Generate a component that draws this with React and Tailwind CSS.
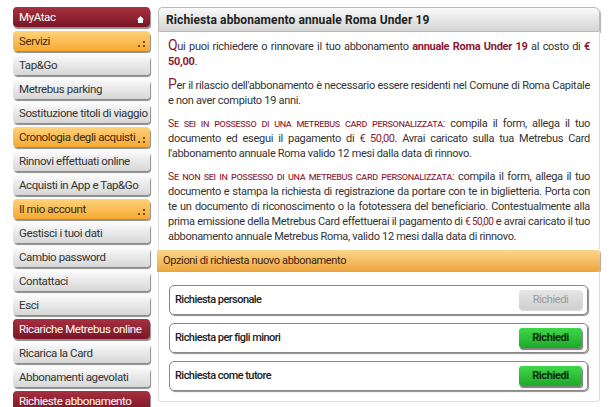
import React from 'react'

const menu = [
  { label: 'MyAtac', kind: 'red', icon: 'home' },
  { label: 'Servizi', kind: 'orange', icon: 'dots' },
  { label: 'Tap&Go', kind: 'gray' },
  { label: 'Metrebus parking', kind: 'gray' },
  { label: 'Sostituzione titoli di viaggio', kind: 'gray' },
  { label: 'Cronologia degli acquisti', kind: 'orange', icon: 'dots' },
  { label: 'Rinnovi effettuati online', kind: 'gray' },
  { label: 'Acquisti in App e Tap&Go', kind: 'gray' },
  { label: 'Il mio account', kind: 'orange', icon: 'dots' },
  { label: 'Gestisci i tuoi dati', kind: 'gray' },
  { label: 'Cambio password', kind: 'gray' },
  { label: 'Contattaci', kind: 'gray' },
  { label: 'Esci', kind: 'gray' },
  { label: 'Ricariche Metrebus online', kind: 'red' },
  { label: 'Ricarica la Card', kind: 'gray' },
  { label: 'Abbonamenti agevolati', kind: 'gray' },
  { label: 'Richieste abbonamento', kind: 'red' },
]

const kinds = {
  red: 'bg-gradient-to-b from-[#a8303f] to-[#7a1426] text-white',
  orange: 'bg-gradient-to-b from-[#ffd27a] to-[#f6a92a] text-[#3a2a10]',
  gray: 'bg-gradient-to-b from-[#fbfbfb] to-[#d6d6d6] text-[#333]',
}

function Dots() {
  return (
    <svg width="7" height="6" viewBox="0 0 7 6" className="absolute right-[5px] bottom-[4px]">
      <rect x="5" y="0" width="2" height="2" fill="#6b4a10" />
      <rect x="0" y="4" width="2" height="2" fill="#6b4a10" />
      <rect x="5" y="4" width="2" height="2" fill="#6b4a10" />
    </svg>
  )
}

function Home() {
  return (
    <svg width="7" height="7" viewBox="0 0 7 7" className="absolute right-[6px] bottom-[4px]">
      <path d="M3.5 0 L7 3.5 L6 3.5 L6 7 L1 7 L1 3.5 L0 3.5 Z" fill="#fff" />
    </svg>
  )
}

const red = 'text-[#8b1a33]'
const caps = `${red} [font-variant:small-caps] text-[10.5px] tracking-[-0.35px]`
const euro = `${red} text-[10px] tracking-[-0.6px]`

// one full line of justified text
function L({ children }) {
  return <div className="whitespace-nowrap text-justify [text-align-last:justify]">{children}</div>
}

function App() {
  return (
    <div className="flex w-[610px] h-[407px] overflow-hidden bg-white pt-[7px] font-['Roboto',sans-serif]">
      <div className="flex flex-col gap-[4px] w-[137px] ml-[13px] shrink-0">
        {menu.map((item, i) => (
          <div
            key={i}
            className={`relative h-[20px] shrink-0 rounded-[4px] pl-[6px] text-[11.5px] tracking-[-0.4px] leading-[20px] whitespace-nowrap shadow-[1px_2px_1px_rgba(0,0,0,0.45)] ${kinds[item.kind]}`}
          >
            {item.label}
            {item.icon === 'dots' && <Dots />}
            {item.icon === 'home' && <Home />}
          </div>
        ))}
      </div>

      <div className="ml-[8px] w-[442px] shrink-0 flex flex-col">
        <div className="h-[25px] shrink-0 rounded-t-[4px] rounded-tr-[6px] bg-gradient-to-b from-[#fafafa] to-[#d4d4d4] border border-[#bbb] shadow-[1px_1px_1px_rgba(0,0,0,0.3)] pl-[7px] text-[12px] tracking-[0.1px] font-bold leading-[24px] text-[#222]">
          Richiesta abbonamento annuale Roma Under 19
        </div>
        <div className="border-x border-[#ddd] bg-white pl-[9px] pr-[9px] pt-[6px] pb-[6px] text-[11px] tracking-[-0.3px] leading-[15px] text-[#333] flex flex-col gap-[8px]">
          <div>
            <L>
              <span className={`${red} text-[14px] leading-[15px]`}>Q</span>ui puoi richiedere o rinnovare il tuo abbonamento{' '}
              <span className={`${red} font-bold`}>annuale Roma Under 19</span> al costo di{' '}
              <span className={`${red} font-bold`}>€</span>
            </L>
            <div>
              <span className={`${red} font-bold`}>50,00</span>.
            </div>
          </div>
          <div>
            <L>
              <span className={`${red} text-[14px] leading-[15px]`}>P</span>er il rilascio dell'abbonamento è necessario essere residenti nel Comune di Roma Capitale
            </L>
            <div>e non aver compiuto 19 anni.</div>
          </div>
          <div>
            <L>
              <span className={caps}>Se sei in possesso di una metrebus card personalizzata:</span> compila il form, allega il tuo
            </L>
            <L>
              documento ed esegui il pagamento di <span className={`${red} tracking-[-0.5px]`}>€ 50,00</span>. Avrai caricato sulla tua Metrebus Card
            </L>
            <div>l'abbonamento annuale Roma valido 12 mesi dalla data di rinnovo.</div>
          </div>
          <div>
            <L>
              <span className={caps}>Se non sei in possesso di una metrebus card personalizzata:</span> compila il form, allega il tuo
            </L>
            <L>documento e stampa la richiesta di registrazione da portare con te in biglietteria. Porta con</L>
            <L>te un documento di riconoscimento o la fototessera del beneficiario. Contestualmente alla</L>
            <L>
              prima emissione della Metrebus Card effettuerai il pagamento di <span className={euro}>€ 50,00</span> e avrai caricato il tuo
            </L>
            <div>abbonamento annuale Metrebus Roma, valido 12 mesi dalla data di rinnovo.</div>
          </div>
        </div>

        <div className="h-[22px] shrink-0 -ml-[1px] rounded-r-[3px] bg-gradient-to-b from-[#fbd588] to-[#eea53a] shadow-[1px_1px_1px_rgba(0,0,0,0.35)] pl-[6px] text-[11px] tracking-[-0.35px] leading-[22px] text-[#3a2410]">
          Opzioni di richiesta nuovo abbonamento
        </div>
        <div className="border-x border-b border-[#ddd] rounded-b-[4px] bg-white pl-[10px] pr-[11px] pt-[13px] pb-[10px] flex flex-col gap-[8px]">
          <Option label="Richiesta personale" disabled />
          <Option label="Richiesta per figli minori" />
          <Option label="Richiesta come tutore" />
        </div>
      </div>
    </div>
  )
}

function Option({ label, disabled }) {
  return (
    <div className="h-[30px] flex items-center justify-between rounded-[5px] border border-[#888] shadow-[1px_1px_1px_rgba(0,0,0,0.45)] pl-[5px] pr-[5px]">
      <span className="text-[11px] font-medium tracking-[-0.55px] text-[#222]">{label}</span>
      <div
        className={`w-[63px] h-[20px] rounded-[3px] text-center text-[11px] leading-[20px] tracking-[-0.4px] ${
          disabled
            ? 'bg-gradient-to-b from-[#e6e6e6] to-[#cfcfcf] text-[#999] shadow-[1px_1px_1px_rgba(0,0,0,0.15)]'
            : 'bg-gradient-to-b from-[#3fd94a] to-[#1ea828] text-[#0c2a0c] font-bold shadow-[1px_2px_1px_rgba(0,0,0,0.5)]'
        }`}
      >
        Richiedi
      </div>
    </div>
  )
}

export default App
